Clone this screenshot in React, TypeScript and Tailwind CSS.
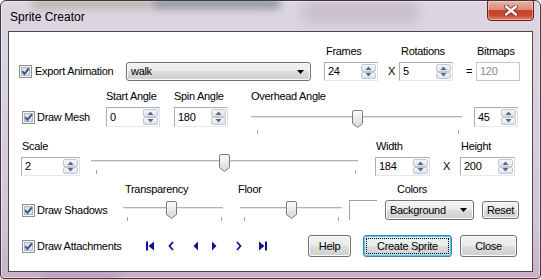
import React from 'react';

// Win7 style dialog text
const txt = "text-[11px] leading-[13px] tracking-[-0.3px] text-black";
const btnBg =
  "bg-[linear-gradient(to_bottom,#f2f2f2_0%,#ebebeb_49%,#dddddd_50%,#cfcfcf_100%)] shadow-[inset_0_0_0_1px_#fbfbfb]";

function Check() {
  return (
    <svg width="13" height="13" viewBox="0 0 13 13" className="shrink-0">
      <rect x="0.5" y="0.5" width="12" height="12" fill="#f6f6f6" stroke="#8f8f8f" />
      <rect x="2.5" y="2.5" width="8" height="8" fill="#dde2e8" stroke="#b3b8bf" />
      <path d="M3.2 6.2 L5.4 8.9 L9.9 3.3" fill="none" stroke="#3d5596" strokeWidth="1.9" />
    </svg>
  );
}

function SpinHalf({ up }: { up?: boolean }) {
  return (
    <div className="flex-1 flex items-center justify-center border border-[#c3c8cf] rounded-[2px] bg-[linear-gradient(to_bottom,#f5f7f9,#dde3ea)]">
      <svg width="7" height="4" viewBox="0 0 7 4">
        <path d={up ? "M0.5 4 L3.5 0.5 L6.5 4Z" : "M0.5 0 L3.5 3.5 L6.5 0Z"} fill="#4f6a91" />
      </svg>
    </div>
  );
}

function SpinBox({ value, className }: { value: string; className: string }) {
  return (
    <div className={`flex h-full bg-white border border-[#abadb3] border-r-[#dbdfe6] border-b-[#e3e9ef] ${className}`}>
      <span className="flex-1 pl-[3px] flex items-center">{value}</span>
      <div className="flex flex-col w-[16px] py-px pr-px">
        <SpinHalf up />
        <SpinHalf />
      </div>
    </div>
  );
}

function Combo({ label, className }: { label: string; className: string }) {
  return (
    <div className={`flex items-center justify-between h-full rounded-[3px] border border-[#707070] pl-[4px] pr-[6px] ${btnBg} ${className}`}>
      <span>{label}</span>
      <svg width="7" height="4" viewBox="0 0 7 4">
        <path d="M0 0H7L3.5 4Z" fill="#000" />
      </svg>
    </div>
  );
}

function Button({ label, className, def }: { label: string; className: string; def?: boolean }) {
  return (
    <div
      className={`flex items-center justify-center h-full rounded-[3px] border ${
        def
          ? "border-[#3c7fb1] bg-[linear-gradient(to_bottom,#f2f2f2_0%,#ebebeb_49%,#dddddd_50%,#cfcfcf_100%)] shadow-[inset_0_0_0_1px_#48d1f8] outline-1 outline-dotted outline-black -outline-offset-4"
          : `border-[#707070] ${btnBg}`
      } ${className}`}
    >
      {label}
    </div>
  );
}

function Slider({
  className,
  thumb,
  ticks,
  tickTop,
}: {
  className: string;
  thumb: number;
  ticks: number[];
  tickTop: number;
}) {
  return (
    <div className={`relative h-[22px] ${className}`}>
      <div className="absolute left-0 right-0 top-[6px] h-px bg-[#b3b3b3]" />
      <div className="absolute left-0 right-0 top-[7px] h-px bg-[#e3e8e6]" />
      {ticks.map((t) => (
        <div key={t} className="absolute w-px h-[4px] bg-[#a5a5a5]" style={{ left: t, top: tickTop }} />
      ))}
      <svg className="absolute top-0" style={{ left: thumb - 5 }} width="11" height="18" viewBox="0 0 11 18">
        <defs>
          <linearGradient id="thumbg" x1="0" y1="0" x2="0" y2="1">
            <stop offset="0" stopColor="#fdfdfd" />
            <stop offset="1" stopColor="#d6d6d6" />
          </linearGradient>
        </defs>
        <path
          d="M2 0.5 H9 Q10.5 0.5 10.5 2 V13.5 L5.5 17.5 L0.5 13.5 V2 Q0.5 0.5 2 0.5 Z"
          fill="url(#thumbg)"
          stroke="#7c7c7c"
        />
      </svg>
    </div>
  );
}

// navigation arrows, dark blue
const navy = "#12128a";
function NavFirst() {
  return (
    <svg width="8" height="10" viewBox="0 0 8 10">
      <rect x="0" y="0.5" width="2" height="9" fill={navy} />
      <path d="M8 0.5 V9.5 L2.5 5Z" fill={navy} />
    </svg>
  );
}
function NavLast() {
  return (
    <svg width="8" height="10" viewBox="0 0 8 10">
      <path d="M0 0.5 V9.5 L5.5 5Z" fill={navy} />
      <rect x="6" y="0.5" width="2" height="9" fill={navy} />
    </svg>
  );
}
function NavPrev() {
  return (
    <svg width="6" height="10" viewBox="0 0 6 10">
      <path d="M5 1 L1.5 5 L5 9" fill="none" stroke={navy} strokeWidth="1.8" />
    </svg>
  );
}
function NavNext() {
  return (
    <svg width="6" height="10" viewBox="0 0 6 10">
      <path d="M1 1 L4.5 5 L1 9" fill="none" stroke={navy} strokeWidth="1.8" />
    </svg>
  );
}
function NavBack() {
  return (
    <svg width="5" height="10" viewBox="0 0 5 10">
      <path d="M5 0.5 V9.5 L0.5 5Z" fill={navy} />
    </svg>
  );
}
function NavPlay() {
  return (
    <svg width="5" height="10" viewBox="0 0 5 10">
      <path d="M0 0.5 V9.5 L4.5 5Z" fill={navy} />
    </svg>
  );
}

function CloseX() {
  return (
    <svg width="14" height="11" viewBox="0 0 14 11">
      <path d="M2 1.5 L12 9.5 M12 1.5 L2 9.5" stroke="#5a231a" strokeWidth="4.2" strokeLinecap="round" opacity="0.75" />
      <path d="M2 1.5 L12 9.5 M12 1.5 L2 9.5" stroke="#ffffff" strokeWidth="2.4" strokeLinecap="round" />
    </svg>
  );
}

export default function App() {
  return (
    <div className="w-[541px] h-[279px] font-['Liberation_Sans',Arial,sans-serif]">
      {/* Window frame */}
      <div className="relative w-[541px] h-[279px] overflow-hidden rounded-t-[6px] rounded-b-[4px] border border-[#3a3a3a] bg-[linear-gradient(to_bottom,#dcd6e2_0%,#d8d0de_40%,#d2c4d6_80%,#c8b0c9_100%)] shadow-[inset_0_0_0_1px_rgba(255,255,255,0.5)]">
        {/* blurred desktop behind the glass */}
        <div className="absolute left-[30px] top-[-4px] w-[120px] h-[12px] rounded-full bg-[#8a8a6a] opacity-40 blur-[4px]" />
        <div className="absolute left-[150px] top-[-4px] w-[130px] h-[12px] rounded-full bg-[#3f4a4e] opacity-45 blur-[4px]" />
        <div className="absolute left-[300px] top-[0px] w-[120px] h-[22px] rounded-full bg-[#b9a8c0] opacity-50 blur-[6px]" />
        <div className="absolute left-[40px] bottom-[-4px] w-[80px] h-[10px] rounded-full bg-[#a890a8] opacity-50 blur-[4px]" />

        {/* Title bar */}
        <div className="relative flex items-start justify-between h-[30px]">
          <span className="mt-[9px] ml-[9px] text-[12px] leading-[15px] text-black">Sprite Creator</span>
          <div className="-mt-px mr-[6px] flex items-center justify-center w-[47px] h-[21px] rounded-b-[4px] rounded-t-[2px] border border-[#6d2116] bg-[linear-gradient(to_bottom,#eab1a3_0%,#d98d7c_45%,#c4442b_50%,#c8462d_75%,#df8a6f_100%)] shadow-[inset_0_0_0_1px_rgba(255,255,255,0.35)]">
            <CloseX />
          </div>
        </div>

        {/* Client area */}
        <div className={`relative ml-[7px] w-[525px] h-[241px] bg-white border border-[#4a4a4a] ${txt}`}>
          {/* Frames / Rotations / Bitmaps labels */}
          <div className="flex h-[13px] mt-[13px] pl-[317px]">
            <span className="w-[75px]">Frames</span>
            <span className="w-[76px]">Rotations</span>
            <span>Bitmaps</span>
          </div>

          {/* Export animation row */}
          <div className="flex items-center h-[19px] mt-[4px] pl-[10px]">
            <label className="flex items-center gap-[3px] w-[107px]">
              <Check />
              <span>Export Animation</span>
            </label>
            <Combo label="walk" className="w-[185px]" />
            <SpinBox value="24" className="ml-[13px] w-[54px]" />
            <span className="w-[21px] pl-[10px]">X</span>
            <SpinBox value="5" className="w-[54px]" />
            <span className="w-[23px] pl-[13px]">=</span>
            <div className="flex items-center h-full w-[44px] pl-[3px] bg-white border border-[#c4c6cb] text-[#8a8a8a]">120</div>
          </div>

          {/* Angle labels */}
          <div className="flex h-[13px] mt-[9px] pl-[97px]">
            <span className="w-[68px]">Start Angle</span>
            <span className="w-[77px]">Spin Angle</span>
            <span>Overhead Angle</span>
          </div>

          {/* Draw mesh row */}
          <div className="flex items-center h-[20px] mt-[4px] pl-[13px]">
            <label className="flex items-center gap-[2px] w-[84px]">
              <Check />
              <span>Draw Mesh</span>
            </label>
            <SpinBox value="0" className="w-[54px]" />
            <SpinBox value="180" className="ml-[14px] w-[54px]" />
            <Slider className="self-start mt-[3px] ml-[23px] w-[211px]" thumb={106} ticks={[6, 207]} tickTop={20} />
            <SpinBox value="45" className="ml-[12px] w-[44px]" />
          </div>

          {/* Scale / Width / Height labels */}
          <div className="flex h-[13px] mt-[13px] pl-[13px]">
            <span className="w-[354px]">Scale</span>
            <span className="w-[85px]">Width</span>
            <span>Height</span>
          </div>

          {/* Scale row */}
          <div className="flex items-center h-[19px] mt-[4px] pl-[12px]">
            <SpinBox value="2" className="w-[59px]" />
            <Slider className="self-start -mt-[3px] ml-[11px] w-[267px]" thumb={133} ticks={[5, 264]} tickTop={16} />
            <SpinBox value="184" className="ml-[17px] w-[55px]" />
            <span className="w-[30px] pl-[13px]">X</span>
            <SpinBox value="200" className="w-[55px]" />
          </div>

          {/* Transparency / Floor / Colors labels */}
          <div className="flex h-[13px] mt-[7px] pl-[116px]">
            <span className="w-[113px]">Transparency</span>
            <span className="w-[159px]">Floor</span>
            <span>Colors</span>
          </div>

          {/* Shadows row */}
          <div className="flex items-center h-[20px] mt-[4px] pl-[13px]">
            <label className="flex items-center gap-[2px] w-[101px]">
              <Check />
              <span>Draw Shadows</span>
            </label>
            <Slider className="self-start mt-[1px] w-[100px]" thumb={48} ticks={[4, 98]} tickTop={16} />
            <Slider className="self-start mt-[1px] ml-[17px] w-[102px]" thumb={51} ticks={[4, 98]} tickTop={16} />
            <div className="ml-[7px] w-[28px] h-full border-t border-l border-[#a0a0a0]" />
            <Combo label="Background" className="ml-[8px] w-[89px]" />
            <Button label="Reset" className="ml-[8px] w-[37px] !h-[18px]" />
          </div>

          {/* Attachments row + buttons */}
          <div className="flex items-center h-[22px] mt-[15px] pl-[13px]">
            <label className="flex items-center gap-[2px] w-[124px]">
              <Check />
              <span>Draw Attachments</span>
            </label>
            <NavFirst />
            <span className="ml-[14px] flex"><NavPrev /></span>
            <span className="ml-[19px] flex"><NavBack /></span>
            <span className="ml-[14px] flex"><NavPlay /></span>
            <span className="ml-[19px] flex"><NavNext /></span>
            <span className="ml-[17px] flex"><NavLast /></span>
            <Button label="Help" className="ml-[41px] w-[43px]" />
            <Button label="Create Sprite" className="ml-[12px] w-[89px]" def />
            <Button label="Close" className="ml-[8px] w-[57px]" />
          </div>
        </div>
      </div>
    </div>
  );
}
